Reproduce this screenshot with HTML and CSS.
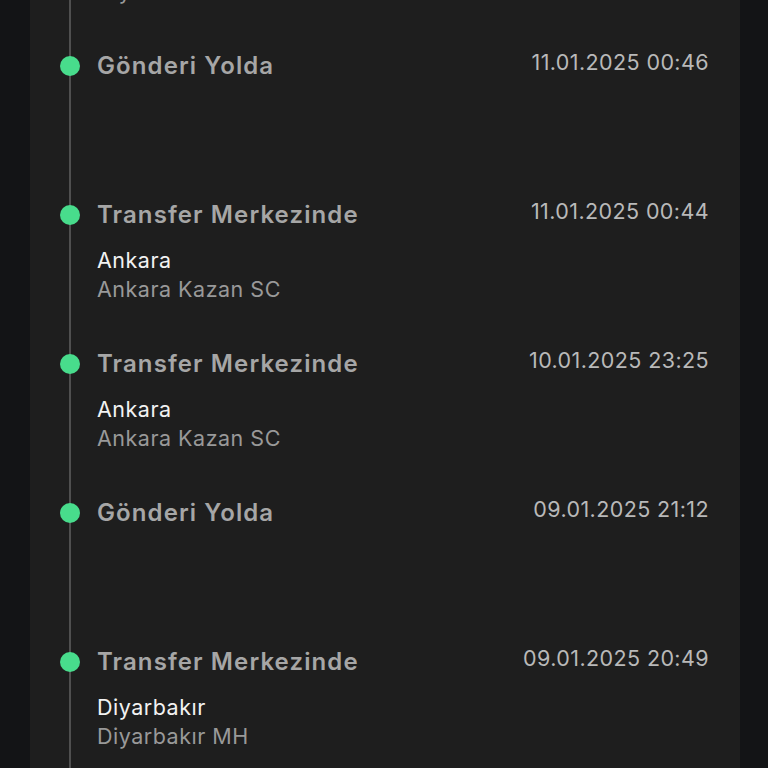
FILE: index.html
```html
<!DOCTYPE html>
<html lang="tr">
  <head>
    <meta charset="UTF-8" />
    <meta name="viewport" content="width=device-width, initial-scale=1" />
    <title>Gönderi Takibi</title>
    <link rel="stylesheet" href="styles.css">
  </head>
  <body>
    <div class="card">
      <ul class="timeline">
        <li class="event">
          <span class="dot"></span>
          <div class="info">
            <div class="head">
              <span class="status">Transfer Merkezinde</span>
              <span class="date">09.01.2025 19:02</span>
            </div>
            <div class="city">Diyarbakır</div>
            <div class="branch">Diyarbakır MH</div>
          </div>
        </li>
        <li class="event">
          <span class="dot"></span>
          <div class="info">
            <div class="head">
              <span class="status">Gönderi Yolda</span>
              <span class="date">11.01.2025 00:46</span>
            </div>
          </div>
        </li>
        <li class="event">
          <span class="dot"></span>
          <div class="info">
            <div class="head">
              <span class="status">Transfer Merkezinde</span>
              <span class="date">11.01.2025 00:44</span>
            </div>
            <div class="city">Ankara</div>
            <div class="branch">Ankara Kazan SC</div>
          </div>
        </li>
        <li class="event">
          <span class="dot"></span>
          <div class="info">
            <div class="head">
              <span class="status">Transfer Merkezinde</span>
              <span class="date">10.01.2025 23:25</span>
            </div>
            <div class="city">Ankara</div>
            <div class="branch">Ankara Kazan SC</div>
          </div>
        </li>
        <li class="event">
          <span class="dot"></span>
          <div class="info">
            <div class="head">
              <span class="status">Gönderi Yolda</span>
              <span class="date">09.01.2025 21:12</span>
            </div>
          </div>
        </li>
        <li class="event">
          <span class="dot"></span>
          <div class="info">
            <div class="head">
              <span class="status">Transfer Merkezinde</span>
              <span class="date">09.01.2025 20:49</span>
            </div>
            <div class="city">Diyarbakır</div>
            <div class="branch">Diyarbakır MH</div>
          </div>
        </li>
      </ul>
    </div>
  </body>
</html>
```

FILE: styles.css
```css
/* Reset and basic styles */
* {
  margin: 0;
  padding: 0;
  box-sizing: border-box;
}
html,
body {
  height: 100%;
  overflow: hidden;
}
body {
  font-family: Inter, "Noto Sans", sans-serif;
  background: #131416;
}
.card {
  margin: 0 28px 0 30px;
  height: 100%;
  background: #1e1e1e;
  padding: 0 31px 0 30px;
  overflow: hidden;
}
.timeline {
  position: relative;
  list-style: none;
  margin-top: -98px;
}
.timeline::before {
  content: "";
  position: absolute;
  left: 9px;
  top: 0;
  bottom: 0;
  width: 2px;
  background: #4f4f4f;
}
.event {
  display: flex;
  align-items: flex-start;
  gap: 17px;
  height: 149px;
}
.dot {
  position: relative;
  flex: none;
  width: 20px;
  height: 20px;
  margin-top: 5px;
  border-radius: 50%;
  background: #48dc8c;
}
.info {
  flex: 1;
}
.head {
  display: flex;
  justify-content: space-between;
  align-items: flex-start;
  height: 30px;
}
.status {
  font-size: 24px;
  font-weight: 600;
  letter-spacing: 1.1px;
  line-height: 30px;
  color: #a6a6a6;
}
.date {
  font-size: 21.5px;
  letter-spacing: 0.4px;
  line-height: 22px;
  color: #b9b9b9;
}
.city {
  margin-top: 16px;
  font-size: 21.5px;
  letter-spacing: 0.5px;
  line-height: 29px;
  color: #f2f2f2;
}
.branch {
  font-size: 21.5px;
  letter-spacing: 0.5px;
  line-height: 29px;
  color: #999;
}
```
